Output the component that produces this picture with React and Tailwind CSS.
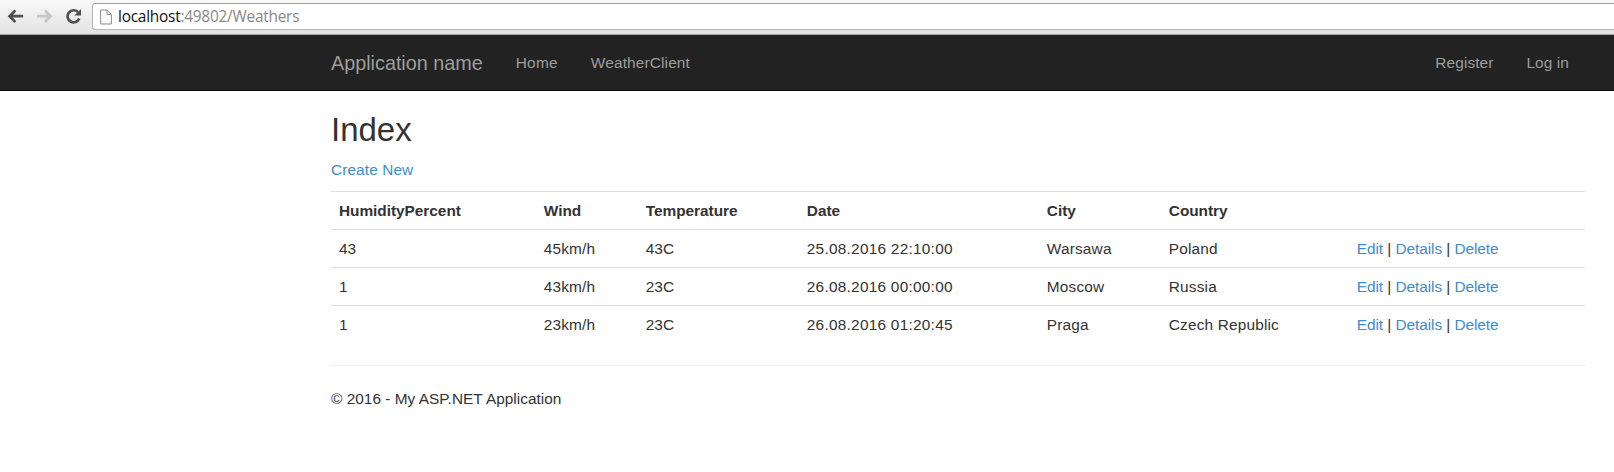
import React from 'react';

const rows = [
  ['43', '45km/h', '43C', '25.08.2016 22:10:00', 'Warsawa', 'Poland'],
  ['1', '43km/h', '23C', '26.08.2016 00:00:00', 'Moscow', 'Russia'],
  ['1', '23km/h', '23C', '26.08.2016 01:20:45', 'Praga', 'Czech Republic'],
];

const spacing = ['', 'tracking-[0.15px]', '', 'tracking-[0.25px]', 'tracking-[0.18px]', 'tracking-[0.17px]'];

function Toolbar() {
  return (
    <div className="flex h-[35px] items-start border-b border-[#a5a7a6] bg-gradient-to-b from-[#f8f8f8] to-[#e3e3e3] pl-[7px]">
      <svg className="mt-[8px] h-4 w-[18px] shrink-0" viewBox="0 0 18 16" fill="none" stroke="#505050" strokeWidth="2.7" strokeLinecap="round">
        <path d="M7.6 3.2 2.6 8.2 7.6 13.2M3 8.2H15" />
      </svg>
      <svg className="mt-[8px] ml-[11px] h-4 w-[18px] shrink-0" viewBox="0 0 18 16" fill="none" stroke="#c6c6c6" strokeWidth="2.7" strokeLinecap="round">
        <path d="M9.6 3.2 14.6 8.2 9.6 13.2M14.4 8.2H2.2" />
      </svg>
      <svg className="mt-[8px] ml-[11px] h-4 w-[17px] shrink-0" viewBox="0 0 17 16" fill="none">
        <path d="M13 4.2A6 6 0 1 0 14.2 10.4" stroke="#505050" strokeWidth="2.7" />
        <path d="M16 1v6.6H9.4z" fill="#505050" />
      </svg>
      <div className="mt-[3px] ml-[10px] flex h-[27px] flex-1 items-center rounded-l-[3px] border border-r-0 border-[#b5b5b5] border-t-[#a0a0a0] bg-white pl-[7px]">
        <svg className="h-4 w-3 shrink-0" viewBox="0 0 12 16" fill="#fafafa" stroke="#8e8e8e">
          <path d="M.6 1h6.6l4.2 4.4V15H.6zM7 1v4.4h4.4" />
        </svg>
        <span className="ml-[6px] pt-px font-['Open_Sans',sans-serif] text-[15.4px] leading-[20px] tracking-[-0.23px] whitespace-nowrap text-[#888]">
          <span className="text-[#111]">localhost</span>:49802/Weathers
        </span>
      </div>
    </div>
  );
}

function Navbar() {
  return (
    <nav className="flex h-14 items-center border-b border-[#080808] bg-[#222] pr-[45px] pl-[331px] leading-[22px] text-[#9d9d9d]">
      <a className="text-[19.8px]">Application name</a>
      <a className="ml-[33px] tracking-[0.25px]">Home</a>
      <a className="ml-[33px] tracking-[0.15px]">WeatherClient</a>
      <a className="ml-auto tracking-[0.1px]">Register</a>
      <a className="ml-[33px] tracking-[0.1px]">Log in</a>
    </nav>
  );
}

export default function App() {
  return (
    <div className="h-[472px] overflow-hidden bg-white font-['Liberation_Sans',Arial,sans-serif] text-[15.4px] leading-[22px] text-[#333]">
      <Toolbar />
      <Navbar />
      <main className="pt-[21px] pr-[29px] pl-[331px]">
        <h2 className="text-[33px] leading-[36px]">Index</h2>
        <p className="mt-[11px] text-[#428bca]"><a className="tracking-[0.1px]">Create New</a></p>
        <table className="mt-[10px] w-full table-fixed border-collapse">
          <colgroup>
            <col className="w-[204px]" />
            <col className="w-[102px]" />
            <col className="w-[161px]" />
            <col className="w-[240px]" />
            <col className="w-[122px]" />
            <col className="w-[188px]" />
            <col />
          </colgroup>
          <tbody>
            <tr className="h-[38px] border-t border-[#ddd] text-left tracking-[-0.03px]">
              {['HumidityPercent', 'Wind', 'Temperature', 'Date', 'City', 'Country', ''].map((h) => (
                <th key={h} className="py-0 pl-[8.8px] font-bold first:pl-[8px]">{h}</th>
              ))}
            </tr>
            {rows.map((r) => (
              <tr key={r[3]} className="h-[38px] border-t border-[#ddd]">
                {r.map((c, i) => (
                  <td key={i} className={`py-0 pl-[8.8px] first:pl-[8px] ${spacing[i]}`}>{c}</td>
                ))}
                <td className="py-0 pl-[8.8px] tracking-[-0.06px] whitespace-nowrap">
                  <a className="text-[#428bca]">Edit</a> | <a className="text-[#428bca]">Details</a> | <a className="text-[#428bca]">Delete</a>
                </td>
              </tr>
            ))}
          </tbody>
        </table>
        <hr className="mt-[21px] border-[#eee]" />
        <footer className="mt-[22px] tracking-[0.02px]">© 2016 - My ASP.NET Application</footer>
      </main>
    </div>
  );
}
